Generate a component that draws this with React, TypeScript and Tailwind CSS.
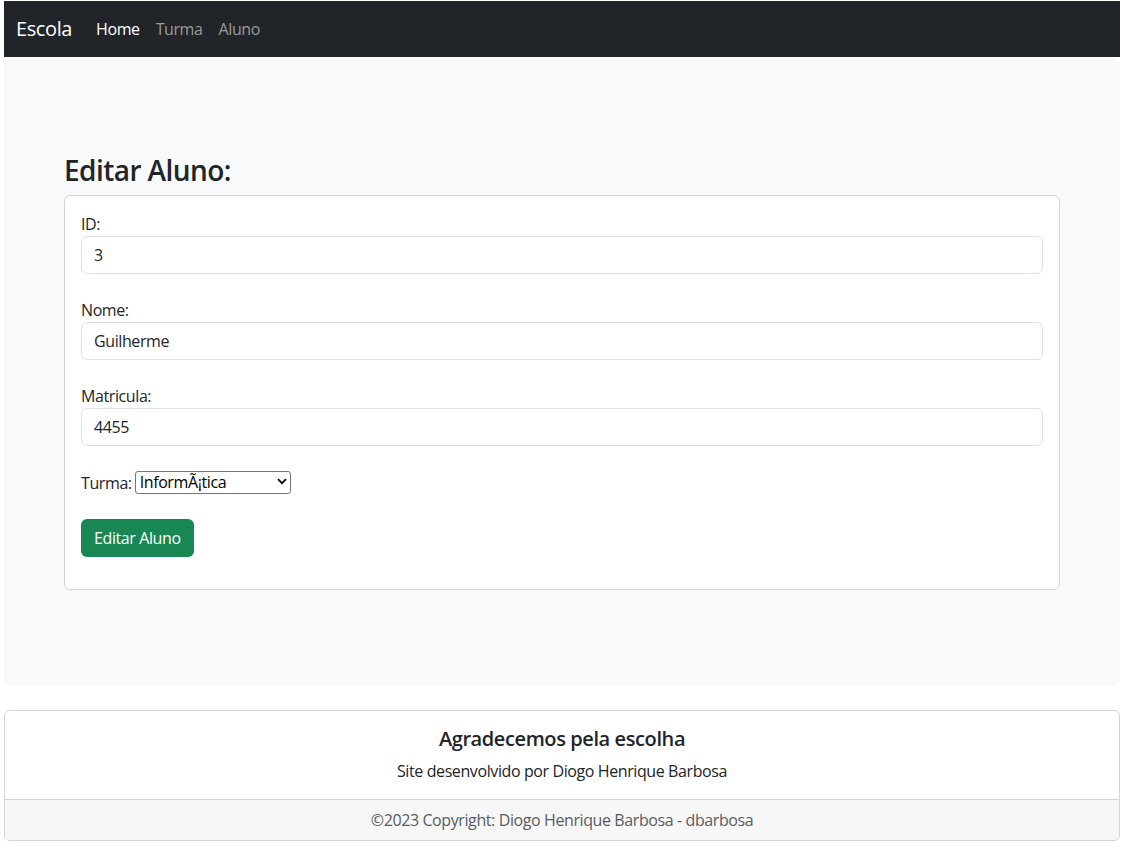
import React from "react";

function Field({ label, value, last }: { label: string; value: string; last?: boolean }) {
  return (
    <div className={last ? "mb-[25px]" : "mb-6"}>
      <label className="block leading-6">{label}</label>
      <input
        readOnly
        value={value}
        className="block w-full h-[38px] rounded-[6px] border border-[#dee2e6] bg-white px-3 text-base text-[#212529] outline-none"
      />
    </div>
  );
}

export default function App() {
  return (
    <div className="min-h-[849px] bg-white pl-[4px] pr-[6px] pt-[1px] font-['Open_Sans',sans-serif] text-base leading-6 tracking-[-0.025em] text-[#212529]">
      <nav className="flex h-[56px] items-center bg-[#212529] px-3">
        <span className="mr-4 text-[20px] leading-[30px] text-white">Escola</span>
        <div className="flex">
          <span className="px-2 text-white">Home</span>
          <span className="px-2 text-[#9a9c9e]">Turma</span>
          <span className="px-2 text-[#9a9c9e]">Aluno</span>
        </div>
      </nav>

      <main className="mt-[1px] rounded-[8px] bg-[#f8f9fa] p-12">
        <div className="my-12 px-3">
          <h3 className="mb-[7px] text-[28px] font-semibold leading-[1.2] tracking-[-0.02em]">Editar Aluno:</h3>
          <div className="rounded-[6px] border border-[#d3d4d5] bg-white p-4">
            <Field label="ID:" value="3" />
            <Field label="Nome:" value="Guilherme" />
            <Field label="Matricula:" value="4455" last />
            <div className="mb-6 flex items-center">
              <span className="mr-[3px]">Turma:</span>
              <div className="relative inline-block">
                <select
                  defaultValue="inf"
                  className="block h-[23px] w-[156px] appearance-none rounded-[3px] border border-[#767676] bg-white py-0 pl-[4px] pr-6 text-base leading-[19px] tracking-[-0.025em] text-black outline-none"
                >
                  <option value="inf">InformÃ¡tica</option>
                </select>
                <svg
                  className="pointer-events-none absolute right-[4px] top-[7px]"
                  width="10"
                  height="7"
                  viewBox="0 0 10 7"
                  fill="none"
                >
                  <path d="M1 1.2L5 5.2L9 1.2" stroke="#000" strokeWidth="1.8" />
                </svg>
              </div>
            </div>
            <button className="mb-4 rounded-[6px] bg-[#198754] px-[13px] py-[7px] text-base leading-6 text-white">
              Editar Aluno
            </button>
          </div>
        </div>
      </main>

      <footer className="mt-6 overflow-hidden rounded-[6px] border border-[#d3d4d5] text-center">
        <div className="px-4 pt-4 pb-4">
          <h5 className="mb-2 text-[20px] font-semibold leading-[1.2] tracking-[-0.02em]">Agradecemos pela escolha</h5>
          <p>Site desenvolvido por Diogo Henrique Barbosa</p>
        </div>
        <div className="border-t border-[#d3d4d5] bg-[#f7f7f7] py-2 text-[#595c5f]">
          ©2023 Copyright: Diogo Henrique Barbosa - dbarbosa
        </div>
      </footer>
    </div>
  );
}
